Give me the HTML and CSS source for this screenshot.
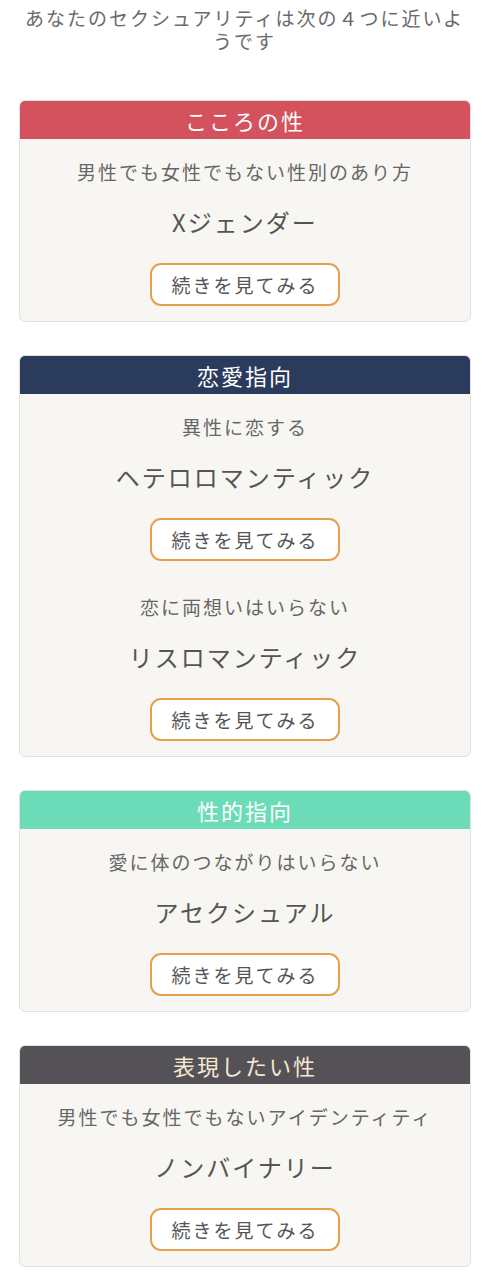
FILE: index.html
```html
<!DOCTYPE html>
<html lang="ja">
<head>
  <meta charset="UTF-8"/>
  <meta name="viewport" content="width=device-width, initial-scale=1.0"/>
  <title>診断結果</title>
  <link rel="stylesheet" href="styles.css">
</head>
<body>
  <p class="lead">あなたのセクシュアリティは次の４つに近いようです</p>

  <div class="cards">
    <div class="card">
      <div class="card-head head-kokoro">こころの性</div>
      <div class="card-body">
        <div class="item">
          <p class="sub">男性でも女性でもない性別のあり方</p>
          <p class="name">Xジェンダー</p>
          <a class="more" href="#">続きを見てみる</a>
        </div>
      </div>
    </div>

    <div class="card">
      <div class="card-head head-renai">恋愛指向</div>
      <div class="card-body">
        <div class="item">
          <p class="sub">異性に恋する</p>
          <p class="name">ヘテロロマンティック</p>
          <a class="more" href="#">続きを見てみる</a>
        </div>
        <div class="item">
          <p class="sub">恋に両想いはいらない</p>
          <p class="name">リスロマンティック</p>
          <a class="more" href="#">続きを見てみる</a>
        </div>
      </div>
    </div>

    <div class="card">
      <div class="card-head head-seiteki">性的指向</div>
      <div class="card-body">
        <div class="item">
          <p class="sub">愛に体のつながりはいらない</p>
          <p class="name">アセクシュアル</p>
          <a class="more" href="#">続きを見てみる</a>
        </div>
      </div>
    </div>

    <div class="card">
      <div class="card-head head-hyogen">表現したい性</div>
      <div class="card-body">
        <div class="item">
          <p class="sub">男性でも女性でもないアイデンティティ</p>
          <p class="name">ノンバイナリー</p>
          <a class="more" href="#">続きを見てみる</a>
        </div>
      </div>
    </div>
  </div>
</body>
</html>
```

FILE: styles.css
```css
body { margin:0; background:#fff; font-family:"Noto Sans CJK JP","Noto Sans",sans-serif; color:#666; }
p { margin:0; }
.lead { padding:6px 20px 0; font-size:19px; line-height:23px; letter-spacing:2px; text-align:center; color:#6a6a6a; }
.cards { display:flex; flex-direction:column; gap:33px; padding:48px 18px 14px 19px; }
.card { border:1px solid #e4e1dd; border-radius:6px; overflow:hidden; background:#f7f6f3; }
.card-head { height:38px; line-height:38px; text-align:center; font-size:22px; letter-spacing:2px; color:#fff; }
.head-kokoro { background:#d4525e; }
.head-renai { background:#2a3b5d; }
.head-seiteki { background:#6cdcb8; }
.head-hyogen { background:#555257; color:#f6e8d2; }
.card-body { padding:20px 0 15px; display:flex; flex-direction:column; gap:33px; }
.item { display:flex; flex-direction:column; align-items:center; }
.sub { font-size:19px; line-height:26px; letter-spacing:2px; color:#666; }
.name { margin-top:20px; font-size:24px; line-height:34px; letter-spacing:2px; color:#555; }
.more { margin-top:24px; box-sizing:border-box; width:190px; height:43px; line-height:39px; text-align:center; border:2px solid #e6a04c; border-radius:11px; background:#fff; color:#555; font-size:19px; letter-spacing:2px; text-decoration:none; }
```
